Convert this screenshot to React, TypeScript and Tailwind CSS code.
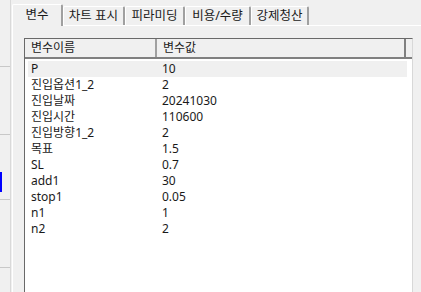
import { FC } from 'react'

const tabs = [
  { label: '변수', w: 'w-[51px]', active: true },
  { label: '차트 표시', w: 'w-[62px]', active: false },
  { label: '피라미딩', w: 'w-[60px]', active: false },
  { label: '비용/수량', w: 'w-[66px]', active: false },
  { label: '강제청산', w: 'w-[58px]', active: false },
]

const rows: [string, string][] = [
  ['P', '10'],
  ['진입옵션1_2', '2'],
  ['진입날짜', '20241030'],
  ['진입시간', '110600'],
  ['진입방향1_2', '2'],
  ['목표', '1.5'],
  ['SL', '0.7'],
  ['add1', '30'],
  ['stop1', '0.05'],
  ['n1', '1'],
  ['n2', '2'],
]

const App: FC = () => {
  return (
    <div
      className="w-[421px] h-[292px] overflow-hidden bg-[#f0f0f0] flex text-[12px] text-[#1a1a1a]"
      style={{ fontFamily: '"Noto Sans", "Noto Sans CJK KR", sans-serif' }}
    >
      {/* left sliver of the neighbouring pane */}
      <div className="w-[11px] shrink-0 flex flex-col border-r border-[#d9d9d9]">
        <div className="h-[67px] border-b border-[#c8c8c8]" />
        <div className="h-[68px] border-b border-[#c8c8c8]" />
        <div className="h-[65px] border-b border-[#c8c8c8] flex flex-col">
          <div className="h-[37px]" />
          <div className="w-[2px] h-[20px] bg-[#0000ff]" />
        </div>
        <div className="h-[68px] border-b border-[#c8c8c8]" />
      </div>

      {/* tab control */}
      <div className="ml-[1px] flex-1 flex flex-col">
        <div className="h-[25px] flex items-end shrink-0">
          {tabs.map(t =>
            t.active ? (
              <div
                key={t.label}
                className={`${t.w} h-[22px] -mb-px relative z-10 bg-[#f0f0f0] border-l border-t border-white border-r-2 border-r-[#a0a0a0] rounded-t-[2px] flex items-center justify-center leading-none text-[12.5px]`}
              >
                {t.label}
              </div>
            ) : (
              <div
                key={t.label}
                className={`${t.w} h-[19px] bg-[#f0f0f0] border-l border-t border-white border-r-2 border-r-[#a0a0a0] rounded-t-[2px] flex items-center justify-center leading-none text-[12.5px]`}
              >
                {t.label}
              </div>
            )
          )}
        </div>

        <div className="flex-1 border-t border-l border-white pt-[12px] pl-[11px]">
          {/* list view */}
          <div className="w-[389px] h-full bg-white border-l border-t border-[#696969] border-r border-r-[#d8d8d8]">
            <div className="h-[20px] flex bg-[#f0f0f0] border-b-2 border-[#808080]">
              <div className="w-[132px] pl-[6px] flex items-center border-r-2 border-[#a0a0a0] leading-none">
                변수이름
              </div>
              <div className="w-[249px] pl-[6px] flex items-center border-r-2 border-[#808080] leading-none">
                변수값
              </div>
              <div className="flex-1" />
            </div>
            <div className="pt-[2px] pl-[3px] pr-[5px]">
              {rows.map(([name, val], i) => (
                <div
                  key={name}
                  className={`h-[16px] flex items-center leading-none ${
                    i === 0 ? 'bg-[#f0f0f0]' : ''
                  }`}
                >
                  <div className="w-[134px] pl-[3px]">{name}</div>
                  <div>{val}</div>
                </div>
              ))}
            </div>
          </div>
        </div>
      </div>
    </div>
  )
}

export default App
